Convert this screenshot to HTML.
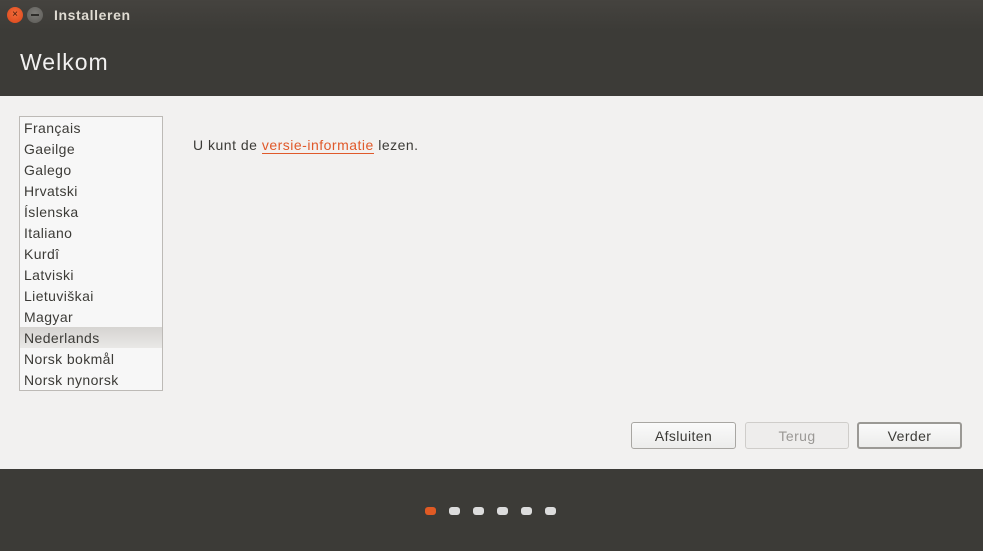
<!DOCTYPE html>
<html><head><meta charset="utf-8"><style>
*{margin:0;padding:0;box-sizing:border-box}
body{width:983px;height:551px;overflow:hidden;font-family:"Liberation Sans","DejaVu Sans",sans-serif;background:#f2f1f0;position:relative;letter-spacing:0.4px}
.title{position:absolute;left:0;top:0;width:983px;height:30px;background:linear-gradient(#45433f,#3c3b37);}
.head{position:absolute;left:0;top:30px;width:983px;height:66px;background:#3c3b37}
.foot{position:absolute;left:0;top:469px;width:983px;height:82px;background:#3c3b37}
.btnc{position:absolute;top:7px;width:16px;height:16px;border-radius:50%}
.list{position:absolute;left:19px;top:116px;width:144px;height:275px;border:1px solid #bdbab6;background:#f7f7f7}
.row{height:21px;line-height:22px;padding-left:4px;font-size:14px;color:#3c3b37}
.sel{background:linear-gradient(#d6d4d1,#e9e8e6)}
.b{position:absolute;top:422px;height:27px;border:1px solid #a8a6a2;border-radius:3px;background:linear-gradient(#fafafa,#ececeb);font-size:14px;line-height:27px;text-align:center;color:#3c3b37}
.dot{position:absolute;top:507px;width:11px;height:8px;border-radius:3px;background:#dcdcdc}
</style></head><body>
<div class="title"></div>
<div class="btnc" style="left:7px;background:radial-gradient(circle at 50% 40%,#f26b3a,#d9461a);font-size:10px;color:#3c1a0a;text-align:center;line-height:16px;letter-spacing:0">×</div>
<div class="btnc" style="left:27px;background:radial-gradient(circle at 50% 40%,#7c7b77,#5b5a56)"><div style="position:absolute;left:4px;top:7px;width:8px;height:2px;background:#2e2d2a"></div></div>
<div style="position:absolute;left:54px;top:7px;font-size:14px;font-weight:bold;color:#dfdbd2;letter-spacing:0.6px">Installeren</div>
<div class="head"></div>
<div style="position:absolute;left:20px;top:49px;font-size:23px;color:#f2f1f0;letter-spacing:1px">Welkom</div>
<div class="list">
<div class="row">Français</div><div class="row">Gaeilge</div><div class="row">Galego</div><div class="row">Hrvatski</div><div class="row">Íslenska</div><div class="row">Italiano</div><div class="row">Kurdî</div><div class="row">Latviski</div><div class="row">Lietuviškai</div><div class="row">Magyar</div><div class="row sel">Nederlands</div><div class="row">Norsk bokmål</div><div class="row">Norsk nynorsk</div>
</div>
<div style="position:absolute;left:193px;top:137px;font-size:14px;color:#3c3b37;letter-spacing:0.5px">U kunt de <span style="color:#e0592a;border-bottom:1px solid #e0592a">versie-informatie</span> lezen.</div>
<div class="b" style="left:631px;width:105px">Afsluiten</div>
<div class="b" style="left:745px;width:104px;background:#eeedec;border-color:#cfcdca;color:#9a9895">Terug</div>
<div class="b" style="left:857px;width:105px;border:2px solid #9b9995;line-height:24px">Verder</div>
<div class="foot"></div>
<div class="dot" style="left:425px;background:#e05a24"></div>
<div class="dot" style="left:449px"></div>
<div class="dot" style="left:473px"></div>
<div class="dot" style="left:497px"></div>
<div class="dot" style="left:521px"></div>
<div class="dot" style="left:545px"></div>
</body></html>
